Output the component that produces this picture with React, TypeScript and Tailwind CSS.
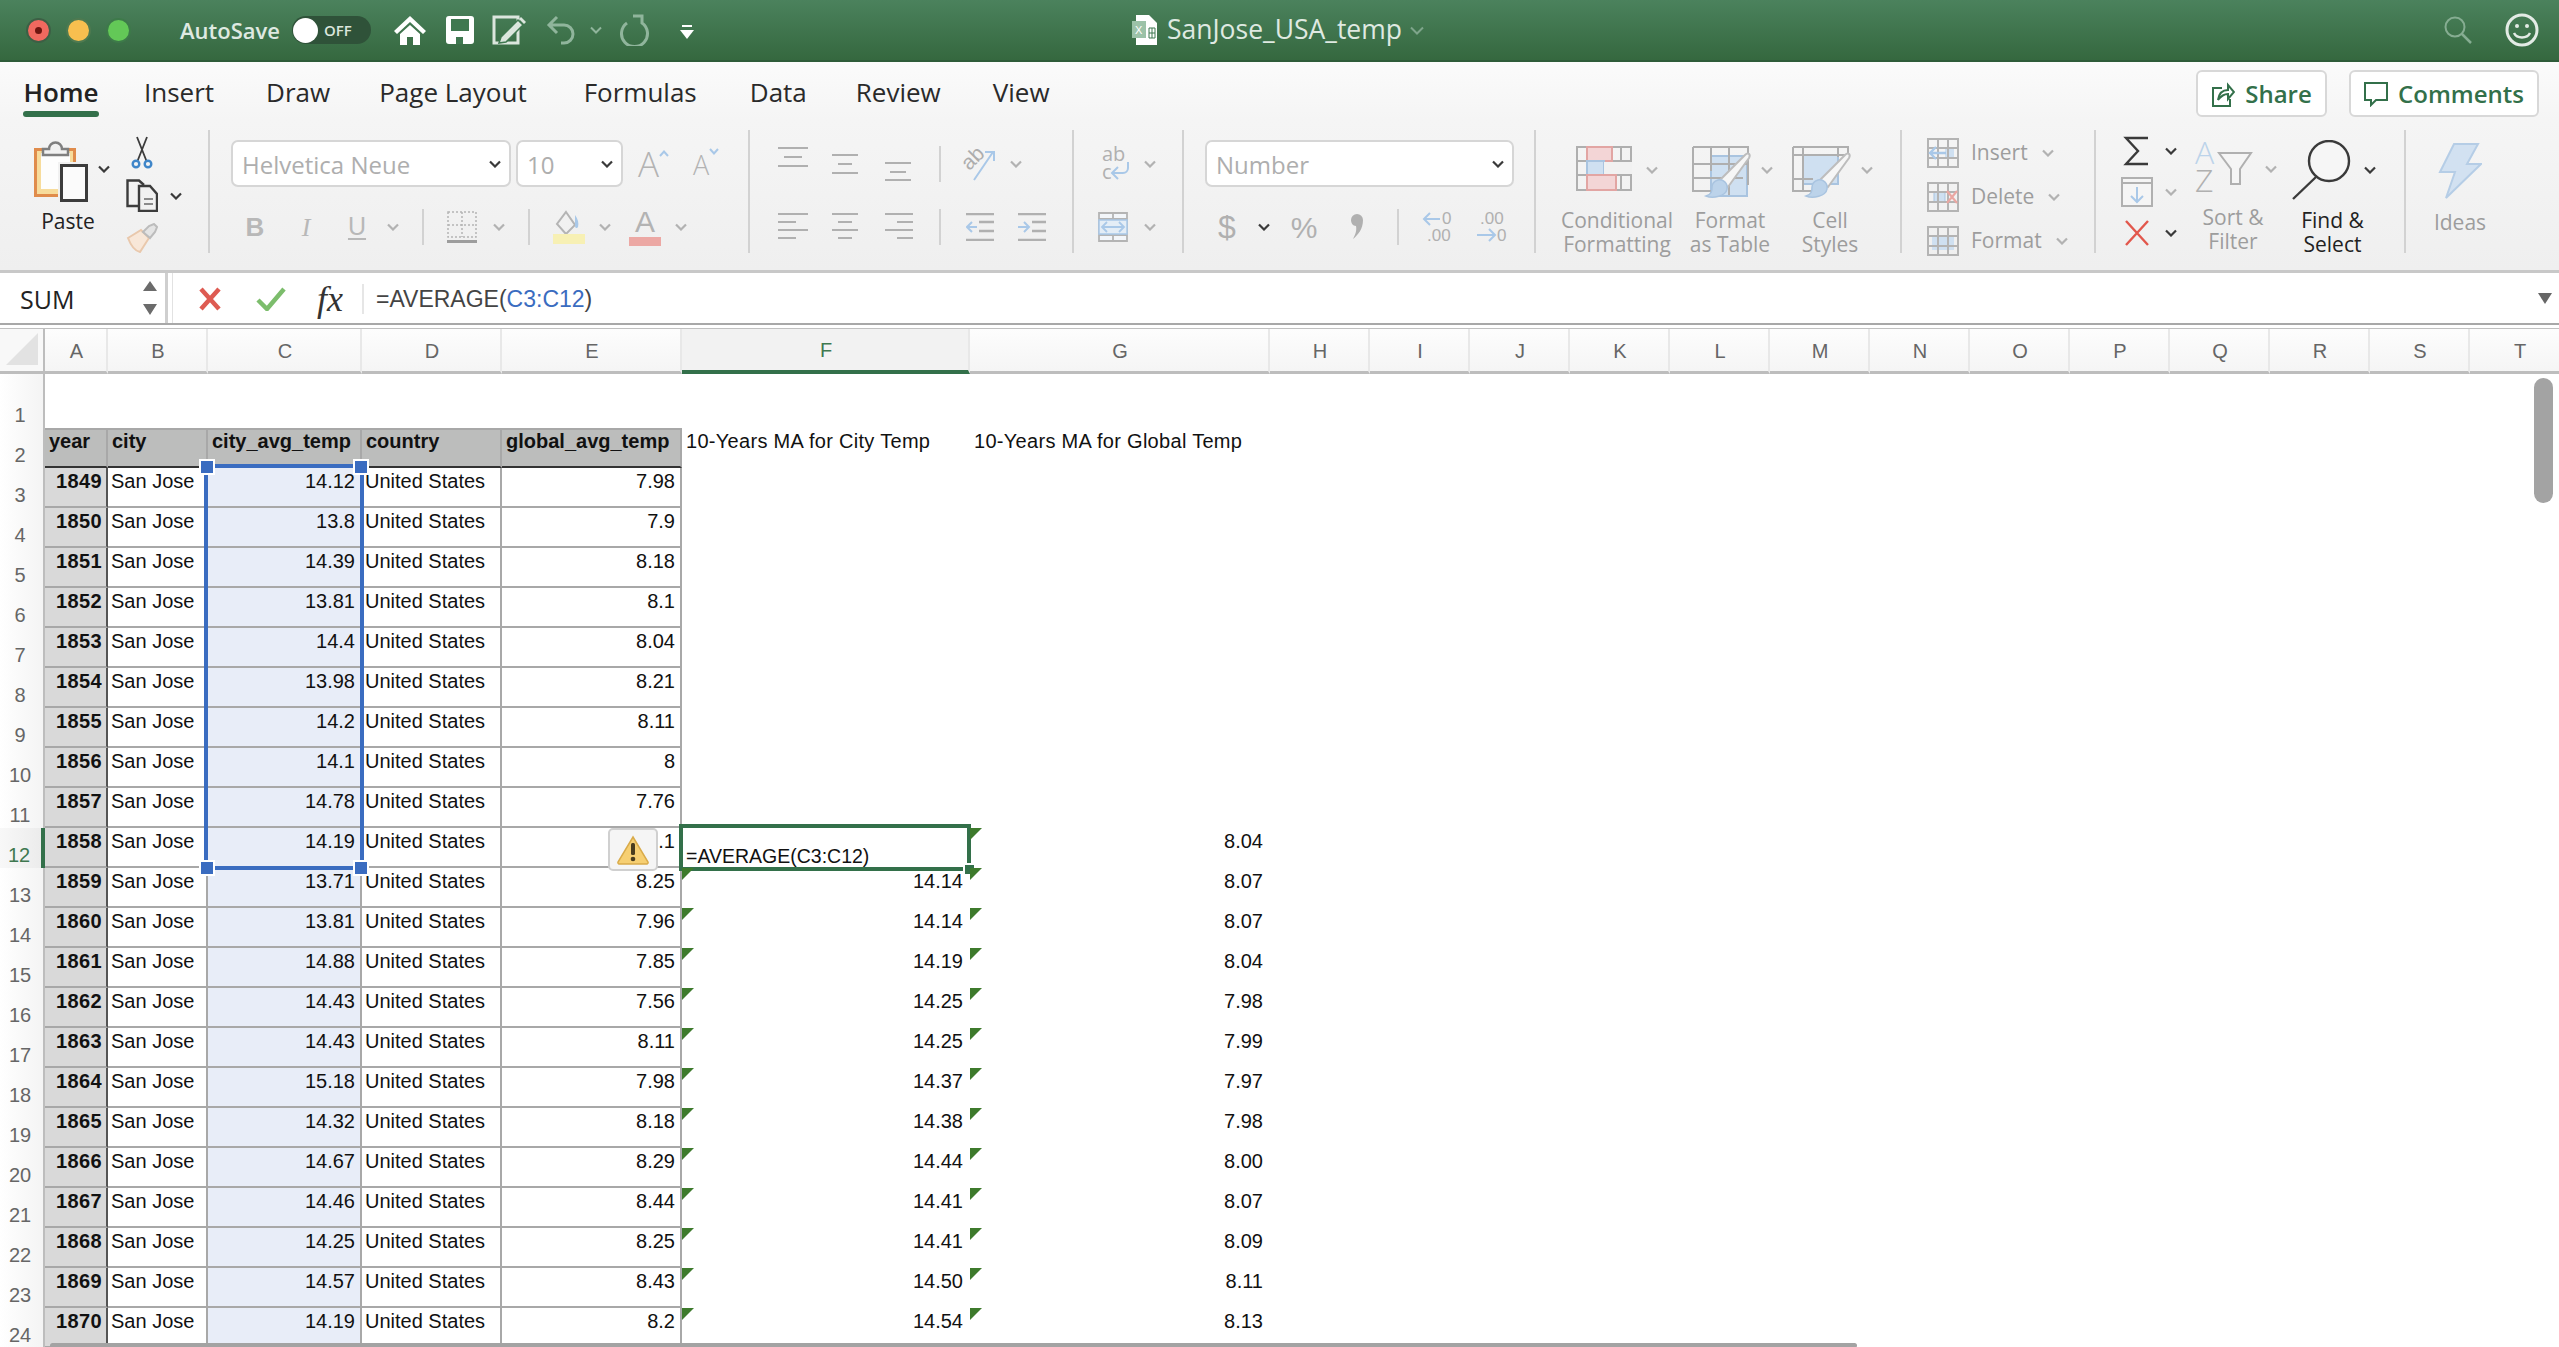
import React from 'react'

const UI = '"Open Sans", "Noto Sans", sans-serif'

const colC = ['14.12','13.8','14.39','13.81','14.4','13.98','14.2','14.1','14.78','14.19','13.71','13.81','14.88','14.43','14.43','15.18','14.32','14.67','14.46','14.25','14.57','14.19']
const colE = ['7.98','7.9','8.18','8.1','8.04','8.21','8.11','8','7.76','8.1','8.25','7.96','7.85','7.56','8.11','7.98','8.18','8.29','8.44','8.25','8.43','8.2']
const colF: Record<number, string> = { 13:'14.14', 14:'14.14', 15:'14.19', 16:'14.25', 17:'14.25', 18:'14.37', 19:'14.38', 20:'14.44', 21:'14.41', 22:'14.41', 23:'14.50', 24:'14.54' }
const colG: Record<number, string> = { 12:'8.04', 13:'8.07', 14:'8.07', 15:'8.04', 16:'7.98', 17:'7.99', 18:'7.97', 19:'7.98', 20:'8.00', 21:'8.07', 22:'8.09', 23:'8.11', 24:'8.13' }

const tail = ['H','I','J','K','L','M','N','O','P','Q','R','S']

function Chev({ dark = false }: { dark?: boolean }) {
  return (
    <svg width="12" height="8" viewBox="0 0 12 8" className="shrink-0">
      <path d="M1 1.5 6 6.5 11 1.5" fill="none" stroke={dark ? '#3a3a3a' : '#b2b2b2'} strokeWidth="2.2" />
    </svg>
  )
}

function Lines({ rows }: { rows: number[][] }) {
  return (
    <svg width="30" height="34" viewBox="0 0 30 34" className="shrink-0">
      {rows.map((r, i) => (
        <rect key={i} x={r[0]} y={r[1]} width={r[2]} height="2" fill="#b0b0b0" />
      ))}
    </svg>
  )
}

function Sep() {
  return <div className="w-[2px] h-[36px] bg-[#d2d2d2] shrink-0" />
}

function Select({ label, w }: { label: string; w: string }) {
  return (
    <div className={`${w} h-[47px] shrink-0 flex items-center justify-between bg-white border-2 border-[#d6d6d6] rounded-[7px] pl-[9px] pr-[8px] text-[24px] text-[#aeaeae]`}>
      <span className="mt-[2px]">{label}</span>
      <Chev dark />
    </div>
  )
}

function Paste() {
  return (
    <svg width="54" height="62" viewBox="0 0 54 62" className="shrink-0">
      <rect x="1.5" y="9.5" width="39" height="46" fill="#f7dc9c" stroke="#e08c4c" strokeWidth="3" />
      <rect x="7" y="13" width="29" height="36" fill="#fdfdfd" />
      <path d="M9 15h25V9h-6a6.500 6.500 0 0 0-13 0H9z" fill="#f2f2f2" stroke="#7f7f7f" strokeWidth="2.500" />
      <rect x="24" y="22" width="30" height="40" fill="#f1f1f1" />
      <rect x="27.500" y="25.500" width="25" height="35" fill="#fbfbfb" stroke="#3c3c3c" strokeWidth="3" />
    </svg>
  )
}

function Styled({ kind }: { kind: 'table' | 'cell' }) {
  return (
    <svg width="60" height="60" viewBox="0 0 60 60" className="shrink-0">
      {kind === 'table' ? (
        <g>
          <rect x="19" y="16" width="36" height="40" fill="#cfe0f1" stroke="#a9c4e0" strokeWidth="2" />
          <path d="M1 7h55v38M1 7v44h24M1 24h55M1 38h50M19 7v24M37 7v48" fill="none" stroke="#afafaf" strokeWidth="2" />
        </g>
      ) : (
        <g>
          <rect x="11" y="15" width="35" height="29" fill="#cfe0f1" stroke="#a9c4e0" strokeWidth="2" />
          <path d="M1 7h55v10M1 7v44h20M1 15h55M1 39h20M11 7v44M46 7v10" fill="none" stroke="#afafaf" strokeWidth="2" />
        </g>
      )}
      <path d="M27 41 53 15c3-3 6-1 4 3L36 47z" fill="#f6f6f6" stroke="#bdbdbd" strokeWidth="2" />
      <path d="M26 40c5-1 10 3 9 9-1 7-14 10-21 7 6-2 6-5 6-9 0-4 3-6 6-7z" fill="#bcd3ea" stroke="#a9c4e0" strokeWidth="1.500" />
    </svg>
  )
}

function Conditional() {
  return (
    <svg width="56" height="60" viewBox="0 0 56 60" className="shrink-0">
      <path d="M1 7h54v43H1zM1 21h54M1 35h54M11 7v43M36 7v43M45 7v43" fill="none" stroke="#afafaf" strokeWidth="2" />
      <rect x="11" y="7" width="25" height="14" fill="#f3d5d6" stroke="#e2a5a3" strokeWidth="2" />
      <rect x="11" y="21" width="17" height="14" fill="#cfe0f1" stroke="#a9c4e0" strokeWidth="2" />
      <rect x="28" y="22" width="30" height="12" fill="#f1f1f1" />
      <rect x="11" y="35" width="29" height="15" fill="#f3d5d6" stroke="#e2a5a3" strokeWidth="2" />
    </svg>
  )
}

function CellIcon({ kind }: { kind: 'insert' | 'delete' | 'format' }) {
  return (
    <svg width="32" height="30" viewBox="0 0 32 30" className="shrink-0">
      {kind === 'format' && <rect x="5" y="9" width="22" height="15" fill="#cfe0f1" />}
      {kind === 'insert' && <rect x="18" y="9" width="9" height="11" fill="#cfe0f1" />}
      {kind === 'delete' && <rect x="7" y="10" width="11" height="10" fill="#cfe0f1" stroke="#a9c4e0" />}
      <path d="M1 1h30v28H1zM1 10h30M1 20h30M11 1v28M21 1v28" fill="none" stroke="#b4b4b4" strokeWidth="2" />
      {kind === 'insert' && <path d="M3 15h16M9 9l-6 6 6 6" fill="none" stroke="#a9c8e8" strokeWidth="2.400" />}
      {kind === 'delete' && <path d="M20 9l10 12M30 9 20 21" fill="none" stroke="#eba7a2" strokeWidth="2.200" />}
    </svg>
  )
}

function RibbonItem({ children, line1, line2, w, dark = false }: { children: React.ReactNode; line1: string; line2?: string; w: string; dark?: boolean }) {
  return (
    <div className={`${w} shrink-0 flex flex-col`}>
      <div className="flex items-center h-[62px] mt-[10px]">{children}</div>
      <div className={`mt-[8px] text-center text-[21px] leading-[24px] whitespace-nowrap ${dark ? 'text-[#222]' : 'text-[#9d9d9d]'}`}>
        <div>{line1}</div>
        {line2 && <div>{line2}</div>}
      </div>
    </div>
  )
}

function TitleBar() {
  return (
    <div className="h-[62px] flex items-center bg-gradient-to-b from-[#4b825d] to-[#35683f] border-b-2 border-[#2f5c3a]" style={{ fontFamily: UI }}>
      <div className="w-[1132px] shrink-0 flex items-center">
        <div className="ml-[26px] w-[25px] h-[25px] rounded-full bg-[#f0695f] border-2 border-[#3d5f45] flex items-center justify-center">
          <div className="w-[7px] h-[7px] rounded-full bg-[#6e1510]" />
        </div>
        <div className="ml-[15px] w-[25px] h-[25px] rounded-full bg-[#f8bf4f] border-2 border-[#4f7a50]" />
        <div className="ml-[15px] w-[25px] h-[25px] rounded-full bg-[#63c857] border-2 border-[#3d7a49]" />
        <span className="ml-[49px] w-[112px] text-[22px] font-semibold text-[#dfe9e1] whitespace-nowrap">AutoSave</span>
        <div className="w-[79px] h-[28px] rounded-full bg-[#2f5239] flex items-center">
          <div className="w-[25px] h-[25px] ml-[1px] rounded-full bg-white" />
          <span className="ml-[6px] text-[15px] font-semibold text-[#dbe6dd]">OFF</span>
        </div>
        <svg width="32" height="30" viewBox="0 0 32 30" className="ml-[23px]">
          <path d="M16 1 0 16l3 3L16 7l13 12 3-3z" fill="#fff" />
          <path d="M6 19v11h7v-8h6v8h7V19L16 10z" fill="#fff" />
        </svg>
        <svg width="28" height="28" viewBox="0 0 28 28" className="ml-[20px]">
          <rect width="28" height="28" rx="3" fill="#fff" />
          <rect x="5" y="3" width="18" height="12" fill="#3f7850" />
          <rect x="10" y="21" width="7" height="7" fill="#3f7850" />
        </svg>
        <svg width="36" height="30" viewBox="0 0 36 30" className="ml-[18px]">
          <path d="M2 2h24v26H2z" fill="none" stroke="#dbe6dd" strokeWidth="3" />
          <path d="M9 22 26 5l5 5-17 17-7 1z" fill="#dbe6dd" stroke="#3f7850" strokeWidth="1.500" />
          <path d="M29 2l5 5-2 2-5-5z" fill="#dbe6dd" />
        </svg>
        <svg width="30" height="30" viewBox="0 0 30 30" className="ml-[18px]">
          <path d="M11 2 3 10l8 8M3 10h15a9 9 0 0 1 0 18h-3" fill="none" stroke="#90b59c" strokeWidth="3" />
        </svg>
        <svg width="12" height="8" viewBox="0 0 12 8" className="ml-[14px]">
          <path d="M1 1.500 6 6.500 11 1.500" fill="none" stroke="#90b59c" strokeWidth="2" />
        </svg>
        <svg width="30" height="32" viewBox="0 0 30 32" className="ml-[18px]">
          <path d="M7 9a13 13 0 1 0 15 0V2h-9" fill="none" stroke="#90b59c" strokeWidth="3" />
        </svg>
        <svg width="14" height="14" viewBox="0 0 14 14" className="ml-[30px] mt-[4px]">
          <rect x="2" width="10" height="2" fill="#fff" />
          <path d="M0 5h14L7 14z" fill="#fff" />
        </svg>
      </div>
      <svg width="26" height="30" viewBox="0 0 26 30" className="shrink-0">
        <path d="M4 0h13l8 8v22H4z" fill="#fff" />
        <rect y="6" width="14" height="17" fill="#9cc2a8" />
        <path d="M17 13h6v10h-6zM17 18h6M20 13v10" fill="none" stroke="#3f7850" strokeWidth="1" />
        <text x="3" y="19" fontSize="11" fill="#fff" fontFamily="Liberation Sans, sans-serif">X</text>
      </svg>
      <span className="ml-[9px] text-[26.500px] text-[#dfe9e1] whitespace-nowrap">SanJose_USA_temp</span>
      <svg width="14" height="9" viewBox="0 0 14 9" className="ml-[8px]">
        <path d="M1 1.500 7 7.500 13 1.500" fill="none" stroke="#7ea58b" strokeWidth="2" />
      </svg>
      <svg width="28" height="28" viewBox="0 0 28 28" className="ml-auto">
        <circle cx="11" cy="11" r="9.500" fill="none" stroke="#86ad92" strokeWidth="2" />
        <path d="M18 18l9 9" stroke="#86ad92" strokeWidth="2.500" />
      </svg>
      <svg width="34" height="34" viewBox="0 0 34 34" className="ml-[33px] mr-[20px]">
        <circle cx="17" cy="17" r="15" fill="none" stroke="#e3ebe5" strokeWidth="3" />
        <circle cx="12" cy="13" r="2" fill="#e3ebe5" />
        <circle cx="22" cy="13" r="2" fill="#e3ebe5" />
        <path d="M9 20c3 6 13 6 16 0" fill="none" stroke="#e3ebe5" strokeWidth="2.500" />
      </svg>
    </div>
  )
}

function Tabs() {
  return (
    <div className="h-[58px] flex items-start pl-[23px] bg-gradient-to-b from-[#fbfbfb] to-[#f5f5f5] text-[26px] text-[#2a2a2a]" style={{ fontFamily: UI }}>
      <div className="mt-[13px] mr-[45px] flex flex-col items-center">
        <span className="leading-[34px] font-semibold text-[#222]">Home</span>
        <div className="w-[76px] h-[6px] mt-[2px] rounded-full bg-[#33704a]" />
      </div>
      <span className="mt-[13px] leading-[34px] mr-[52px]">Insert</span>
      <span className="mt-[13px] leading-[34px] mr-[49px]">Draw</span>
      <span className="mt-[13px] leading-[34px] mr-[57px]">Page Layout</span>
      <span className="mt-[13px] leading-[34px] mr-[53px]">Formulas</span>
      <span className="mt-[13px] leading-[34px] mr-[49px]">Data</span>
      <span className="mt-[13px] leading-[34px] mr-[52px]">Review</span>
      <span className="mt-[13px] leading-[34px]">View</span>
      <div className="ml-auto mt-[8px] w-[131px] h-[47px] flex items-center justify-center gap-[10px] bg-white border-2 border-[#d8d8d8] rounded-[6px] text-[24px] text-[#33704a] font-semibold">
        <svg width="24" height="26" viewBox="0 0 24 26">
          <path d="M11 7H2v18h17v-7" fill="none" stroke="#33704a" strokeWidth="2" />
          <path d="M7 19c1-7 5-10 10-10V4l6 7-6 7v-5c-4 0-7 2-10 6z" fill="none" stroke="#33704a" strokeWidth="2" />
        </svg>
        <span>Share</span>
      </div>
      <div className="ml-[22px] mr-[20px] mt-[8px] w-[190px] h-[47px] flex items-center justify-center gap-[10px] bg-white border-2 border-[#d8d8d8] rounded-[6px] text-[24px] text-[#33704a] font-semibold">
        <svg width="24" height="26" viewBox="0 0 24 26">
          <path d="M1 2h22v17H12l-5 5v-5H1z" fill="none" stroke="#33704a" strokeWidth="2" />
        </svg>
        <span>Comments</span>
      </div>
    </div>
  )
}

function Ribbon() {
  return (
    <div className="h-[153px] pt-[10px] flex items-start bg-gradient-to-b from-[#f5f5f5] to-[#efefef] border-b-[3px] border-[#c8c8c8]" style={{ fontFamily: UI }}>
      {/* clipboard */}
      <div className="w-[210px] h-[123px] shrink-0 flex border-r-2 border-[#d2d2d2]">
        <div className="ml-[26px] w-[84px] shrink-0 flex flex-col items-center">
          <div className="flex items-center w-full mt-[10px] pl-[8px]">
            <Paste />
            <div className="ml-[10px] -mt-[4px]"><Chev dark /></div>
          </div>
          <div className="mt-[7px] text-[21px] leading-[24px] text-[#222]">Paste</div>
        </div>
        <div className="ml-[16px] flex flex-col pt-[5px]">
          <svg width="32" height="34" viewBox="0 0 32 34">
            <path d="M11 2 20.500 26M21 2 11.500 26" stroke="#3c3c3c" strokeWidth="1.800" fill="none" />
            <circle cx="10" cy="29" r="3.300" fill="none" stroke="#3f86c9" strokeWidth="2.400" />
            <circle cx="22" cy="29" r="3.300" fill="none" stroke="#3f86c9" strokeWidth="2.400" />
          </svg>
          <div className="flex items-center mt-[10px]">
            <svg width="32" height="33" viewBox="0 0 32 33">
              <path d="M14 27H1.500V1.500H13l5 4.500" fill="none" stroke="#3c3c3c" strokeWidth="2.400" />
              <path d="M13 7h11l7 8v17H13z" fill="#f1f1f1" stroke="#3c3c3c" strokeWidth="2.400" />
              <path d="M18 20h9M18 25h9" stroke="#8a8a8a" strokeWidth="2" />
            </svg>
            <div className="ml-[12px]"><Chev dark /></div>
          </div>
          <svg width="32" height="30" viewBox="0 0 32 30" className="mt-[11px]">
            <path d="M2 15 15 7l8 8-9 14c-5-1-9-6-12-14z" fill="#f8e7d8" stroke="#e9c8ac" strokeWidth="2" />
            <path d="M17 9 23 3l5-2 3 3-2 5-5 6z" fill="#e4e4e4" stroke="#bcbcbc" strokeWidth="2" />
          </svg>
        </div>
      </div>

      {/* font */}
      <div className="w-[540px] h-[123px] shrink-0 flex flex-col pt-[10px] pl-[21px] border-r-2 border-[#d2d2d2]">
        <div className="flex items-center h-[47px]">
          <Select label="Helvetica Neue" w="w-[280px]" />
          <div className="ml-[5px]"><Select label="10" w="w-[107px]" /></div>
          <div className="ml-[15px] w-[30px] flex items-start text-[35px] leading-[44px] font-light text-[#b3b3b3]">
            <span>A</span>
            <svg width="10" height="7" viewBox="0 0 10 7" className="mt-[8px] shrink-0"><path d="M1 6 5 1.500 9 6" fill="none" stroke="#a9c8e8" strokeWidth="2" /></svg>
          </div>
          <div className="ml-[25px] w-[30px] flex items-start text-[27px] leading-[44px] font-light text-[#b3b3b3]">
            <span className="mt-[3px]">A</span>
            <svg width="10" height="7" viewBox="0 0 10 7" className="mt-[8px] shrink-0"><path d="M1 1 5 5.500 9 1" fill="none" stroke="#a9c8e8" strokeWidth="2" /></svg>
          </div>
        </div>
        <div className="flex items-center h-[40px] mt-[20px]" style={{ fontFamily: 'Liberation Sans, sans-serif' }}>
          <span className="ml-[9px] w-[30px] text-center text-[26px] font-bold text-[#b8b8b8]">B</span>
          <span className="ml-[21px] w-[30px] text-center text-[26px] italic font-['Liberation_Serif'] text-[#b8b8b8]">I</span>
          <span className="ml-[21px] w-[30px] text-center text-[25px] underline underline-offset-[3px] text-[#b8b8b8]">U</span>
          <div className="ml-[15px]"><Chev /></div>
          <div className="ml-[23px]"><Sep /></div>
          <svg width="30" height="32" viewBox="0 0 30 32" className="ml-[23px]">
            <path d="M1 1h28v25H1zM15 1v25M1 14h28" fill="none" stroke="#b4b4b4" strokeWidth="1.500" strokeDasharray="2 2" />
            <rect y="29" width="30" height="3" fill="#9d9d9d" />
          </svg>
          <div className="ml-[16px]"><Chev /></div>
          <div className="ml-[23px]"><Sep /></div>
          <svg width="32" height="34" viewBox="0 0 32 34" className="ml-[23px]">
            <path d="M13 2l9 13-9 9-9-10z" fill="none" stroke="#b4b4b4" strokeWidth="2" />
            <path d="M22 5c3 4 4 8 3 12-1 2-3 1-3-1z" fill="#a9c8e8" />
            <rect y="24" width="32" height="10" fill="#f7f0b4" />
          </svg>
          <div className="ml-[14px]"><Chev /></div>
          <div className="ml-[18px] w-[32px] flex flex-col items-center">
            <span className="text-[30px] leading-[28px] text-[#b3b3b3]">A</span>
            <div className="w-[32px] h-[9px] mt-[1px] bg-[#eca8a4]" />
          </div>
          <div className="ml-[14px]"><Chev /></div>
        </div>
      </div>

      {/* alignment */}
      <div className="w-[324px] h-[123px] shrink-0 flex flex-col pt-[10px] pl-[28px] border-r-2 border-[#d2d2d2]">
        <div className="flex items-center h-[47px]">
          <Lines rows={[[0,0,30],[6,9,18],[0,18,30]]} />
          <div className="ml-[22px]"><Lines rows={[[2,7,26],[8,16,14],[2,25,26]]} /></div>
          <div className="ml-[23px]"><Lines rows={[[2,15,26],[7,24,16],[2,32,26]]} /></div>
          <div className="ml-[26px]"><Sep /></div>
          <svg width="36" height="36" viewBox="0 0 36 36" className="ml-[21px] overflow-visible">
            <text x="0" y="20" fontSize="21" fill="#adadad" transform="rotate(-45 10 14)" fontFamily="Liberation Sans, sans-serif">ab</text>
            <path d="M12 34 31 6M23 6h9v9" fill="none" stroke="#a9c8e8" strokeWidth="2" />
          </svg>
          <div className="ml-[12px]"><Chev /></div>
        </div>
        <div className="flex items-center h-[40px] mt-[20px]">
          <Lines rows={[[0,3,30],[0,11,18],[0,19,30],[0,27,18]]} />
          <div className="ml-[22px]"><Lines rows={[[2,3,26],[8,11,14],[2,19,26],[8,27,14]]} /></div>
          <div className="ml-[23px]"><Lines rows={[[2,3,28],[14,11,16],[2,19,28],[14,27,16]]} /></div>
          <div className="ml-[26px]"><Sep /></div>
          <svg width="28" height="28" viewBox="0 0 28 28" className="ml-[25px]">
            <path d="M0 1h28M13 9h15M13 18h15M0 27h28" stroke="#b0b0b0" strokeWidth="2.400" />
            <path d="M11 14H1M6 9l-5 5 5 5" fill="none" stroke="#a9c8e8" strokeWidth="2" />
          </svg>
          <svg width="28" height="28" viewBox="0 0 28 28" className="ml-[24px]">
            <path d="M0 1h28M14 9h14M14 18h14M0 27h28" stroke="#b0b0b0" strokeWidth="2.400" />
            <path d="M0 14h10M6 9l5 5-5 5" fill="none" stroke="#a9c8e8" strokeWidth="2" />
          </svg>
        </div>
      </div>

      {/* wrap and merge */}
      <div className="w-[110px] h-[123px] shrink-0 flex flex-col pt-[10px] border-r-2 border-[#d2d2d2]">
        <div className="flex items-center h-[47px] pl-[27px]">
          <svg width="30" height="36" viewBox="0 0 30 36" className="overflow-visible">
            <text x="1" y="15" fontSize="20" fill="#b0b0b0" fontFamily="Open Sans, sans-serif">ab</text>
            <text x="1" y="33" fontSize="20" fill="#b0b0b0" fontFamily="Open Sans, sans-serif">c</text>
            <path d="M27 16v6a5 5 0 0 1-5 5H11M17 21l-6 6 6 6" fill="none" stroke="#a9c8e8" strokeWidth="2" />
          </svg>
          <div className="ml-[13px]"><Chev /></div>
        </div>
        <div className="flex items-center h-[40px] mt-[20px] pl-[24px]">
          <svg width="30" height="30" viewBox="0 0 30 30">
            <path d="M1 1h28v28H1zM1 7h28M1 23h28M15 1v6M15 23v6" fill="#f3f6fa" stroke="#b4b4b4" strokeWidth="1.800" />
            <rect x="1" y="8" width="28" height="14" fill="#e4edf6" stroke="#a9c8e8" strokeWidth="1.500" />
            <path d="M4 15h22M9 10l-5 5 5 5M21 10l5 5-5 5" fill="none" stroke="#a9c8e8" strokeWidth="1.800" />
          </svg>
          <div className="ml-[16px]"><Chev /></div>
        </div>
      </div>

      {/* number */}
      <div className="w-[352px] h-[123px] shrink-0 flex flex-col pt-[10px] border-r-2 border-[#d2d2d2]">
        <div className="flex items-center h-[47px] pl-[21px]">
          <Select label="Number" w="w-[309px]" />
        </div>
        <div className="flex items-center h-[40px] mt-[20px]" style={{ fontFamily: 'Liberation Sans, sans-serif' }}>
          <span className="ml-[31px] w-[24px] text-center text-[32px] font-light text-[#b0b0b0]">$</span>
          <div className="ml-[19px]"><Chev dark /></div>
          <span className="ml-[18px] w-[32px] text-center text-[30px] text-[#b0b0b0]">%</span>
          <svg width="20" height="30" viewBox="0 0 20 30" className="ml-[27px]">
            <path d="M4 8a6 6 0 1 1 12 0c0 9-5 15-10 19 2-4 4-8 3-13-3 0-5-3-5-6z" fill="#b0b0b0" />
          </svg>
          <div className="ml-[30px]"><Sep /></div>
          <svg width="32" height="34" viewBox="0 0 32 34" className="ml-[23px] overflow-visible">
            <text x="20" y="14" fontSize="17" fill="#b0b0b0" fontFamily="Liberation Sans, sans-serif">0</text>
            <text x="5" y="31" fontSize="17" fill="#b0b0b0" fontFamily="Liberation Sans, sans-serif">.00</text>
            <path d="M18 9H2M8 3 2 9l6 6" fill="none" stroke="#a9c8e8" strokeWidth="2" />
          </svg>
          <svg width="32" height="34" viewBox="0 0 32 34" className="ml-[21px] overflow-visible">
            <text x="5" y="14" fontSize="17" fill="#b0b0b0" fontFamily="Liberation Sans, sans-serif">.00</text>
            <text x="22" y="31" fontSize="17" fill="#b0b0b0" fontFamily="Liberation Sans, sans-serif">0</text>
            <path d="M2 25h17M14 19l6 6-6 6" fill="none" stroke="#a9c8e8" strokeWidth="2" />
          </svg>
        </div>
      </div>

      {/* styles */}
      <div className="w-[366px] h-[123px] shrink-0 flex border-r-2 border-[#d2d2d2]">
        <div className="w-[20px] shrink-0" />
        <RibbonItem w="w-[122px]" line1="Conditional" line2="Formatting">
          <div className="ml-[20px]"><Conditional /></div>
          <div className="ml-[14px]"><Chev /></div>
        </RibbonItem>
        <div className="w-[7px] shrink-0" />
        <RibbonItem w="w-[90px]" line1="Format" line2="as Table">
          <div className="ml-[7px]"><Styled kind="table" /></div>
          <div className="ml-[9px]"><Chev /></div>
        </RibbonItem>
        <div className="w-[15px] shrink-0" />
        <RibbonItem w="w-[80px]" line1="Cell" line2="Styles">
          <div className="ml-[2px]"><Styled kind="cell" /></div>
          <div className="ml-[9px]"><Chev /></div>
        </RibbonItem>
      </div>

      {/* cells */}
      <div className="w-[194px] h-[123px] shrink-0 flex flex-col pt-[1px] pl-[25px] border-r-2 border-[#d2d2d2] text-[21px] text-[#9d9d9d]">
        <div className="h-[44px] shrink-0 flex items-center">
          <CellIcon kind="insert" />
          <span className="ml-[12px] mr-[14px]">Insert</span>
          <Chev />
        </div>
        <div className="h-[44px] shrink-0 flex items-center">
          <CellIcon kind="delete" />
          <span className="ml-[12px] mr-[14px]">Delete</span>
          <Chev />
        </div>
        <div className="h-[44px] shrink-0 flex items-center">
          <CellIcon kind="format" />
          <span className="ml-[12px] mr-[14px]">Format</span>
          <Chev />
        </div>
      </div>

      {/* editing */}
      <div className="w-[310px] h-[123px] shrink-0 flex border-r-2 border-[#d2d2d2]">
        <div className="ml-[25px] w-[69px] shrink-0 flex flex-col">
          <div className="h-[44px] flex items-center">
            <svg width="32" height="30" viewBox="0 0 32 30">
              <path d="M27 2H5l12 13L5 28h22" fill="none" stroke="#3a3a3a" strokeWidth="2.400" />
            </svg>
            <div className="ml-[12px]"><Chev dark /></div>
          </div>
          <div className="h-[44px] flex items-center">
            <svg width="32" height="30" viewBox="0 0 32 30">
              <path d="M1 1h30v28H1zM1 6h30" fill="#f5f5f5" stroke="#b0b0b0" strokeWidth="2" />
              <path d="M16 10v15M10 19l6 6 6-6" fill="none" stroke="#a9c8e8" strokeWidth="2" />
            </svg>
            <div className="ml-[12px]"><Chev /></div>
          </div>
          <div className="h-[44px] flex items-center">
            <svg width="32" height="30" viewBox="0 0 32 30">
              <path d="M5 3 27 27M27 3 5 27" stroke="#e2574c" strokeWidth="2.400" />
            </svg>
            <div className="ml-[12px]"><Chev dark /></div>
          </div>
        </div>
        <RibbonItem w="w-[86px]" line1="Sort &" line2="Filter">
          <svg width="58" height="56" viewBox="0 0 58 56" className="ml-[5px] shrink-0 overflow-visible">
            <text x="0" y="23" fontSize="32" fontWeight="300" fill="#bcd3ea" fontFamily="Open Sans, sans-serif">A</text>
            <text x="0" y="51" fontSize="32" fontWeight="300" fill="#b0b0b0" fontFamily="Open Sans, sans-serif">Z</text>
            <path d="M24 12h32L45 28v15h-9V28z" fill="#f5f5f5" stroke="#b0b0b0" strokeWidth="2" />
          </svg>
          <div className="ml-[12px]"><Chev /></div>
        </RibbonItem>
        <div className="w-[13px] shrink-0" />
        <RibbonItem w="w-[87px]" line1="Find &" line2="Select" dark>
          <svg width="60" height="60" viewBox="0 0 60 60" className="ml-[3px] shrink-0">
            <ellipse cx="37" cy="21" rx="20" ry="20" fill="#f6f6f6" stroke="#3a3a3a" strokeWidth="2.400" />
            <path d="M24 37 1 59" stroke="#3a3a3a" strokeWidth="2.400" />
          </svg>
          <div className="ml-[12px]"><Chev dark /></div>
        </RibbonItem>
      </div>

      {/* ideas */}
      <div className="ml-[24px]">
        <RibbonItem w="w-[60px]" line1="Ideas">
          <svg width="44" height="58" viewBox="0 0 44 58" className="ml-[8px] shrink-0">
            <path d="M16 2h24L29 22h14L8 56l9-26H2z" fill="#d2e1f1" stroke="#b5cde6" strokeWidth="2" />
          </svg>
        </RibbonItem>
      </div>
    </div>
  )
}

function FormulaBar() {
  return (
    <div className="h-[56px] flex flex-col">
      <div className="h-[50px] flex bg-white">
        <div className="w-[168px] shrink-0 flex items-center justify-between pl-[20px] pr-[8px] border-r-[3px] border-[#cfcfcf] text-[25px] text-[#222]" style={{ fontFamily: UI }}>
          <span className="mt-[3px]">SUM</span>
          <svg width="14" height="34" viewBox="0 0 14 34">
            <path d="M7 0l7 10H0zM7 34 0 23h14z" fill="#6b6b6b" />
          </svg>
        </div>
        <div className="flex-1 flex items-center pt-[1px] ml-[4px] border-l border-[#e2e2e2]">
          <svg width="22" height="24" viewBox="0 0 22 24" className="ml-[26px]">
            <path d="M2 2 20 22M20 2 2 22" stroke="#de5b52" strokeWidth="4.500" />
          </svg>
          <svg width="30" height="24" viewBox="0 0 30 24" className="ml-[35px]">
            <path d="M2 13l9 9L28 2" fill="none" stroke="#7cbd6c" strokeWidth="4.500" />
          </svg>
          <span className="ml-[31px] w-[34px] text-[36px] leading-[40px] italic text-[#333]" style={{ fontFamily: '"Liberation Serif", serif' }}>fx</span>
          <div className="ml-[11px] w-[2px] h-[30px] bg-[#e6e6e6]" />
          <div className="ml-[12px] mt-[2px] text-[23px] text-[#444] whitespace-nowrap" style={{ fontFamily: '"Liberation Sans", sans-serif' }}>
            =AVERAGE(<span className="text-[#3a6cc0]">C3:C12</span>)
          </div>
          <svg width="14" height="11" viewBox="0 0 14 11" className="ml-auto mr-[7px]">
            <path d="M0 0h14L7 11z" fill="#666" />
          </svg>
        </div>
      </div>
      <div className="h-[6px] bg-white border-t-2 border-b border-t-[#a8a8a8] border-b-[#c0c0c0]" />
    </div>
  )
}

function ColHead({ label, w, active = false }: { label: string; w: string; active?: boolean }) {
  return (
    <div className={`${w} shrink-0 h-[45px] flex items-center justify-center pl-[2px] pt-[1px] border-r-2 border-[#e8e8e8] ${active ? 'bg-[#f2f2f2] text-[#3f7850] border-b-4 border-b-[#33704a]' : 'bg-gradient-to-b from-[#fdfdfd] to-[#f5f5f5] text-[#666] border-b-[3px] border-b-[#bdbdbd]'}`}>
      {label}
    </div>
  )
}

function RowHead({ n }: { n: number }) {
  const active = n === 12
  return (
    <div className={`w-[45px] shrink-0 flex items-end justify-center pb-[1px] pr-[3px] leading-[24px] border-r-2 ${active ? 'bg-gradient-to-r from-[#f8f8f8] to-[#ececec] text-[#3f7850] border-r-4 border-r-[#33704a]' : 'bg-gradient-to-r from-white to-[#f4f4f4] text-[#666] border-r-[#bdbdbd]'}`}>
      {n}
    </div>
  )
}

function Flag() {
  return <div className="absolute left-0 top-0 z-20 w-0 h-0 border-t-[12px] border-r-[12px] border-t-[#3d7a2c] border-r-transparent" />
}

function DataRow({ n, i }: { n: number; i: number }) {
  const cell = 'shrink-0 h-full border-r-2 border-b-2 border-r-[#a8a8a8] border-b-[#a8a8a8]'
  return (
    <div className="h-[40px] flex leading-[24px] text-[#111]">
      <RowHead n={n} />
      <div className="w-[63px] shrink-0 h-full pt-[1px] pr-[4px] text-right font-bold tracking-[0.4px] bg-[#d9d9d9] border-b-2 border-r-2 border-b-[#a8a8a8] border-r-[#555]">{1849 + i}</div>
      <div className={`w-[100px] pt-[1px] pl-[3px] ${cell}`}>San Jose</div>
      <div className={`w-[154px] pt-[1px] pr-[5px] text-right bg-[#e8edf8] ${cell}`}>{colC[i]}</div>
      <div className={`w-[140px] pt-[1px] pl-[3px] ${cell}`}>United States</div>
      <div className={`w-[180px] pt-[1px] pr-[5px] text-right ${cell}`}>{colE[i]}</div>
      {n === 12 ? (
        <div className="w-[288px] shrink-0 h-full flex items-end pl-[4px] text-[19.500px]">=AVERAGE(C3:C12)</div>
      ) : (
        <div className="relative w-[288px] shrink-0 h-full pt-[1px] pr-[7px] text-right">
          {colF[n] && <Flag />}
          {colF[n]}
        </div>
      )}
      <div className="relative w-[300px] shrink-0 h-full pt-[1px] pr-[7px] text-right">
        {colG[n] && <Flag />}
        {colG[n]}
      </div>
    </div>
  )
}

function Sheet() {
  const headCell = 'shrink-0 h-full pl-[4px] leading-[22px] font-bold bg-[#bcbdbc] border-r-2 border-b-2 border-t-2 border-t-[#a8a8a8] border-r-[#a8a8a8] border-b-[#333]'
  const rows = Array.from({ length: 22 }, (_, i) => i)
  return (
    <div className="relative text-[20px]" style={{ fontFamily: '"Liberation Sans", Arial, sans-serif' }}>
      <div className="flex text-[#666]">
        <div className="w-[45px] shrink-0 h-[45px] flex items-end justify-end pr-[5px] pb-[6px] bg-[#f8f8f8] border-r-2 border-b-[3px] border-[#bdbdbd]">
          <div className="w-0 h-0 border-b-[32px] border-l-[32px] border-b-[#e2e2e2] border-l-transparent" />
        </div>
        <ColHead label="A" w="w-[63px]" />
        <ColHead label="B" w="w-[100px]" />
        <ColHead label="C" w="w-[154px]" />
        <ColHead label="D" w="w-[140px]" />
        <ColHead label="E" w="w-[180px]" />
        <ColHead label="F" w="w-[288px]" active />
        <ColHead label="G" w="w-[300px]" />
        {tail.map(c => <ColHead key={c} label={c} w="w-[100px]" />)}
        <ColHead label="T" w="w-[100px]" />
      </div>
      <div className="h-[54px] flex">
        <RowHead n={1} />
      </div>
      <div className="h-[40px] flex leading-[24px] text-[#111]">
        <RowHead n={2} />
        <div className={`w-[63px] ${headCell}`}>year</div>
        <div className={`w-[100px] ${headCell}`}>city</div>
        <div className={`w-[154px] ${headCell}`}>city_avg_temp</div>
        <div className={`w-[140px] ${headCell}`}>country</div>
        <div className={`w-[180px] ${headCell}`}>global_avg_temp</div>
        <div className="w-[288px] shrink-0 pt-[1px] pl-[4px] whitespace-nowrap tracking-[0.3px]">10-Years MA for City Temp</div>
        <div className="w-[300px] shrink-0 pt-[1px] pl-[4px] whitespace-nowrap tracking-[0.3px]">10-Years MA for Global Temp</div>
      </div>
      {rows.map(i => <DataRow key={i} n={i + 3} i={i} />)}

      {/* selected range C3:C12 */}
      <div className="absolute left-[204px] top-[135px] w-[160px] h-[406px] border-4 border-[#3a6cc0] pointer-events-none" />
      <div className="absolute left-[201px] top-[132px] w-[12px] h-[12px] bg-[#3a6cc0] outline-2 outline-white" />
      <div className="absolute left-[355px] top-[132px] w-[12px] h-[12px] bg-[#3a6cc0] outline-2 outline-white" />
      <div className="absolute left-[201px] top-[533px] w-[12px] h-[12px] bg-[#3a6cc0] outline-2 outline-white" />
      <div className="absolute left-[355px] top-[533px] w-[12px] h-[12px] bg-[#3a6cc0] outline-2 outline-white" />

      {/* active cell F12 */}
      <div className="absolute left-[679px] top-[495px] w-[292px] h-[47px] border-4 border-[#33704a] z-10 pointer-events-none" />
      <div className="absolute left-[965px] top-[536px] w-[9px] h-[9px] bg-[#33704a] outline-2 outline-white z-10" />

      {/* error button */}
      <div className="absolute left-[608px] top-[499px] w-[50px] h-[43px] flex items-center justify-center bg-[#f5f5f5] border-2 border-[#d0d0d0] rounded-[5px] z-10">
        <svg width="34" height="30" viewBox="0 0 34 30">
          <path d="M17 2 32 27a1.500 1.500 0 0 1-1 2H3a1.500 1.500 0 0 1-1-2z" fill="#f6cf72" stroke="#d9ab4a" strokeWidth="1.500" />
          <rect x="15" y="8" width="4" height="12" rx="1.500" fill="#4a3d1e" />
          <circle cx="17" cy="24" r="2.300" fill="#4a3d1e" />
        </svg>
      </div>

      {/* scrollbars */}
      <div className="absolute left-[2534px] top-[49px] w-[19px] h-[125px] rounded-full bg-[#a3a3a3]" />
      <div className="absolute left-[50px] top-[1014px] w-[1807px] h-[5px] rounded-full bg-[#a3a3a3]" />
    </div>
  )
}

export default function App() {
  return (
    <div className="w-[2559px] h-[1347px] overflow-hidden bg-white">
      <TitleBar />
      <Tabs />
      <Ribbon />
      <FormulaBar />
      <Sheet />
    </div>
  )
}
